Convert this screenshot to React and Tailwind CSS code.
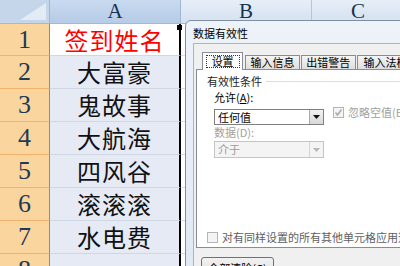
import React from "react";

const rows = [
    { n: 1, name: "签到姓名", red: true },
    { n: 2, name: "大富豪" },
    { n: 3, name: "鬼故事" },
    { n: 4, name: "大航海" },
    { n: 5, name: "四风谷" },
    { n: 6, name: "滚滚滚" },
    { n: 7, name: "水电费" },
    { n: 8, name: "" },
];

const serif = { fontFamily: '"Liberation Serif", serif' };
const cjk = { fontFamily: '"Noto Sans CJK SC", sans-serif' };

function Checkbox({ checked, disabled }) {
    return (
        <div
            className={`w-[11px] h-[11px] border flex items-center justify-center shrink-0 ${
                disabled ? "border-[#b4b4b4] bg-[#f4f4f4]" : "border-[#8f8f8f] bg-gradient-to-br from-[#e6e6e6] to-white"
            }`}>
            {checked && (
                <svg width="9" height="9" viewBox="0 0 9 9">
                    <path d="M1.5 4.5 L3.5 7 L7.5 1.5" fill="none" stroke="#a8a8a8" strokeWidth="1.4" />
                </svg>
            )}
        </div>
    );
}

function Select({ value, disabled, h }) {
    return (
        <div
            className={`w-[110px] ${h} border flex items-stretch ${
                disabled ? "border-[#c4c4c4] bg-[#f4f4f4] text-[#9a9a9a]" : "border-[#7f7f7f] bg-white text-black"
            }`}>
            <div className="flex-1 pl-[3px] flex items-center text-[11px] leading-none">{value}</div>
            <div
                className={`w-[14px] border-l flex items-center justify-center ${
                    disabled ? "border-[#d4d4d4] bg-[#f4f4f4]" : "border-[#a9a9a9] bg-gradient-to-b from-[#f2f2f2] to-[#d8d8d8]"
                }`}>
                <svg width="7" height="4" viewBox="0 0 7 4">
                    <path d="M0 0 H7 L3.5 4 Z" fill={disabled ? "#b8b8b8" : "#111"} />
                </svg>
            </div>
        </div>
    );
}

export default function App() {
    return (
        <div className="w-[400px] h-[266px] overflow-hidden relative bg-white" style={cjk}>
            {/* column headers */}
            <div className="flex h-[24px] border-b border-[#f2a955]">
                <div className="w-[50px] shrink-0 bg-[#c6d6ea] border-r border-[#9eb6ce] relative">
                    <svg className="absolute right-[3px] bottom-[3px]" width="26" height="17" viewBox="0 0 26 17">
                        <path d="M26 0 V17 H0 Z" fill="#e3ebf5" />
                    </svg>
                </div>
                <div
                    className="w-[131px] shrink-0 bg-gradient-to-b from-[#c8daf0] to-[#b6cbe6] border-r border-[#9eb6ce] flex items-center justify-center text-[21px] leading-none text-[#15334f]"
                    style={serif}>
                    A
                </div>
                <div
                    className="w-[131px] shrink-0 bg-gradient-to-b from-[#e6eef8] to-[#d5e1ef] border-r border-[#b4c6dc] flex items-center justify-center text-[21px] leading-none text-[#15334f]"
                    style={serif}>
                    B
                </div>
                <div
                    className="flex-1 bg-gradient-to-b from-[#e6eef8] to-[#d5e1ef] flex items-center justify-center text-[21px] leading-none text-[#15334f] pl-[4px]"
                    style={serif}>
                    C
                </div>
            </div>

            {/* rows */}
            {rows.map((r) => (
                <div key={r.n} className={`flex ${r.n === 1 ? "h-[32px]" : "h-[33px]"}`}>
                    <div
                        className="w-[50px] shrink-0 bg-[#fbd59e] border-r border-[#9c8a70] border-b border-b-[#f0b46c] flex items-center justify-center text-[26px] text-[#1e3b55] leading-none"
                        style={serif}>
                        {r.n}
                    </div>
                    <div
                        className={`w-[131px] shrink-0 border-r-2 border-black border-b border-b-[#cfd6e4] flex items-center justify-center text-[24px] tracking-[1px] leading-none relative ${
                            r.n === 1 ? "bg-white text-[#ff0000]" : "bg-[#e6eaf4] text-[#111]"
                        }`}>
                        {r.name}
                        {r.n === 1 && <div className="absolute -right-[3px] top-[1px] w-[5px] h-[5px] bg-black" />}
                    </div>
                    <div className="flex-1 border-b border-[#d6dde8] bg-white" />
                </div>
            ))}

            {/* dialog */}
            <div className="absolute left-[185px] top-[20px] w-[240px] h-[260px] border border-[#7e8ea3] rounded-tl-[6px] bg-gradient-to-b from-[#eef3fa] to-[#dfe8f3] flex flex-col">
                <div className="h-[23px] pl-[7px] pt-[2px] flex items-center text-[11px] text-black leading-none">数据有效性</div>
                <div className="flex-1 ml-[7px] bg-[#f0f0f0] border-l border-t border-[#a9b5c4] flex flex-col pl-[2px]">
                    {/* tabs */}
                    <div className="flex items-end h-[18px] mt-[8px] relative z-10">
                        <div className="ml-[6px] w-[43px] h-[18px] bg-white border border-b-0 border-[#898c95] flex items-center justify-center">
                            <div className="border border-dotted border-[#333] px-[5px] h-[13px] flex items-center text-[11px] leading-none">
                                设置
                            </div>
                        </div>
                        <div className="ml-[2px] w-[57px] h-[15px] bg-gradient-to-b from-[#f4f4f4] to-[#dedede] border border-[#898c95] flex items-center justify-center text-[11px] leading-none">
                            输入信息
                        </div>
                        <div className="ml-px w-[57px] h-[15px] bg-gradient-to-b from-[#f4f4f4] to-[#dedede] border border-[#898c95] flex items-center justify-center text-[11px] leading-none">
                            出错警告
                        </div>
                        <div className="ml-px w-[70px] h-[15px] bg-gradient-to-b from-[#f4f4f4] to-[#dedede] border border-[#898c95] flex items-center pl-[6px] text-[11px] leading-none whitespace-nowrap">
                            输入法模式
                        </div>
                    </div>

                    {/* panel */}
                    <div className="h-[179px] -mt-px bg-white border border-[#898c95] flex flex-col pl-[10px] pt-[4px] text-[11px] leading-none overflow-hidden">
                        <div className="h-[14px] flex items-center">
                            <span className="text-[#1e1e1e]">有效性条件</span>
                            <div className="flex-1 h-px bg-[#d5dfe5] ml-[4px]" />
                        </div>
                        <div className="h-[14px] mt-[2px] pl-[7px] flex items-center">
                            允许(<span className="underline">A</span>):
                        </div>
                        <div className="flex mt-[5px] pl-[7px]">
                            <Select value="任何值" h="h-[16px]" />
                            <div className="ml-[9px] -mt-[2px] flex items-center h-[11px] gap-[4px] whitespace-nowrap text-[#a0a0a0]">
                                <Checkbox checked disabled />
                                <span>忽略空值(B)</span>
                            </div>
                        </div>
                        <div className="h-[14px] pl-[7px] flex items-center text-[#a0a0a0]">数据(D):</div>
                        <div className="mt-[2px] pl-[7px]">
                            <Select value="介于" disabled h="h-[17px]" />
                        </div>
                        <div className="mt-[72px] h-[14px] flex items-center gap-[4px] whitespace-nowrap text-[#5e5e5e]">
                            <Checkbox disabled />
                            <span>对有同样设置的所有其他单元格应用这些更改(P)</span>
                        </div>
                    </div>

                    <div className="mt-[9px] ml-[5px] w-[73px] h-[22px] border border-[#707070] rounded-[3px] bg-gradient-to-b from-[#f2f2f2] to-[#dcdcdc] flex items-center justify-center text-[11px] leading-none">
                        全部清除(C)
                    </div>
                </div>
            </div>
        </div>
    );
}
